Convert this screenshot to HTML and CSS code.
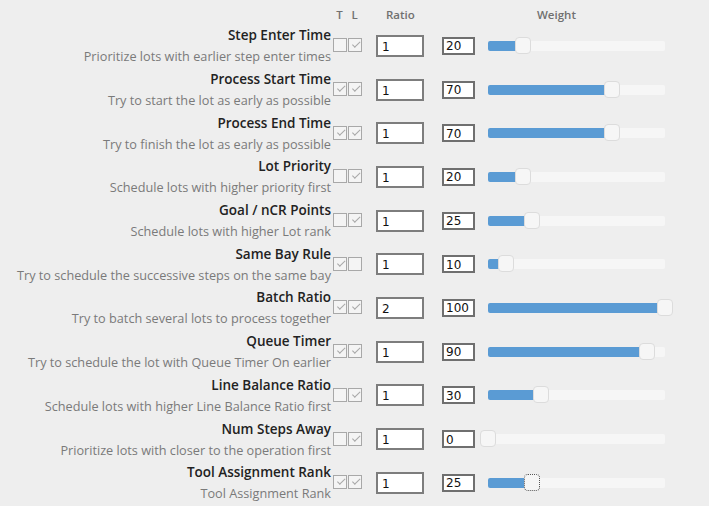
FILE: index.html
```html
<!DOCTYPE html>
<html>
<head>
<meta charset="utf-8">
<link rel="stylesheet" href="styles.css">
</head>
<body>
<div class="table">
  <div class="head"><span></span><span class="hc">T</span><span class="hc">L</span><span></span><span class="hratio">Ratio</span><span></span><span></span><span></span><span class="hweight">Weight</span></div>

  <div class="row">
    <div class="label"><div class="title">Step Enter Time</div><div class="sub">Prioritize lots with earlier step enter times</div></div>
    <span class="cb"></span><span class="cb on"></span>
    <input class="ratio" value="1"><input class="weight" value="20">
    <div class="slider"><div class="fill" style="width:20%"></div><span class="handle" style="left:20%"></span></div>
  </div>

  <div class="row">
    <div class="label"><div class="title">Process Start Time</div><div class="sub">Try to start the lot as early as possible</div></div>
    <span class="cb on"></span><span class="cb on"></span>
    <input class="ratio" value="1"><input class="weight" value="70">
    <div class="slider"><div class="fill" style="width:70%"></div><span class="handle" style="left:70%"></span></div>
  </div>

  <div class="row">
    <div class="label"><div class="title">Process End Time</div><div class="sub">Try to finish the lot as early as possible</div></div>
    <span class="cb on"></span><span class="cb on"></span>
    <input class="ratio" value="1"><input class="weight" value="70">
    <div class="slider"><div class="fill" style="width:70%"></div><span class="handle" style="left:70%"></span></div>
  </div>

  <div class="row">
    <div class="label"><div class="title">Lot Priority</div><div class="sub">Schedule lots with higher priority first</div></div>
    <span class="cb"></span><span class="cb on"></span>
    <input class="ratio" value="1"><input class="weight" value="20">
    <div class="slider"><div class="fill" style="width:20%"></div><span class="handle" style="left:20%"></span></div>
  </div>

  <div class="row">
    <div class="label"><div class="title">Goal / nCR Points</div><div class="sub">Schedule lots with higher Lot rank</div></div>
    <span class="cb"></span><span class="cb on"></span>
    <input class="ratio" value="1"><input class="weight" value="25">
    <div class="slider"><div class="fill" style="width:25%"></div><span class="handle" style="left:25%"></span></div>
  </div>

  <div class="row">
    <div class="label"><div class="title">Same Bay Rule</div><div class="sub">Try to schedule the successive steps on the same bay</div></div>
    <span class="cb on"></span><span class="cb"></span>
    <input class="ratio" value="1"><input class="weight" value="10">
    <div class="slider"><div class="fill" style="width:10%"></div><span class="handle" style="left:10%"></span></div>
  </div>

  <div class="row">
    <div class="label"><div class="title">Batch Ratio</div><div class="sub">Try to batch several lots to process together</div></div>
    <span class="cb on"></span><span class="cb on"></span>
    <input class="ratio" value="2"><input class="weight" value="100">
    <div class="slider"><div class="fill" style="width:100%"></div><span class="handle" style="left:100%"></span></div>
  </div>

  <div class="row">
    <div class="label"><div class="title">Queue Timer</div><div class="sub">Try to schedule the lot with Queue Timer On earlier</div></div>
    <span class="cb on"></span><span class="cb on"></span>
    <input class="ratio" value="1"><input class="weight" value="90">
    <div class="slider"><div class="fill" style="width:90%"></div><span class="handle" style="left:90%"></span></div>
  </div>

  <div class="row">
    <div class="label"><div class="title">Line Balance Ratio</div><div class="sub">Schedule lots with higher Line Balance Ratio first</div></div>
    <span class="cb"></span><span class="cb on"></span>
    <input class="ratio" value="1"><input class="weight" value="30">
    <div class="slider"><div class="fill" style="width:30%"></div><span class="handle" style="left:30%"></span></div>
  </div>

  <div class="row">
    <div class="label"><div class="title">Num Steps Away</div><div class="sub">Prioritize lots with closer to the operation first</div></div>
    <span class="cb"></span><span class="cb on"></span>
    <input class="ratio" value="1"><input class="weight" value="0">
    <div class="slider"><div class="fill" style="width:0%"></div><span class="handle" style="left:0%"></span></div>
  </div>

  <div class="row">
    <div class="label"><div class="title">Tool Assignment Rank</div><div class="sub">Tool Assignment Rank</div></div>
    <span class="cb on"></span><span class="cb on"></span>
    <input class="ratio" value="1"><input class="weight" value="25">
    <div class="slider"><div class="fill" style="width:25%"></div><span class="handle focus" style="left:25%"></span></div>
  </div>
</div>
</body>
</html>
```
FILE: styles.css
```css
html, body {
  margin: 0;
  padding: 0;
  background: #eeeeee;
  width: 709px;
  height: 506px;
  overflow: hidden;
  font-family: "Open Sans", sans-serif;
}
.table {
  padding-top: 4px;
}
.head, .row {
  display: grid;
  grid-template-columns: 332px 15px 15px 14px 48px 18px 33px 13px 177px;
  align-items: center;
}
.head {
  height: 20px;
  font-size: 11.5px;
  font-weight: 600;
  color: #707070;
}
.head .hc {
  text-align: center;
}
.head .hratio {
  padding-left: 10px;
}
.head .hweight {
  padding-left: 49px;
}
.row {
  height: 43.7px;
}
.label {
  text-align: right;
  line-height: 21px;
  padding-top: 1px;
  padding-right: 1px;
}
.title {
  font-size: 13.5px;
  color: #222222;
  font-weight: 600;
}
.sub {
  font-size: 12.7px;
  color: #7a7a7a;
}
.cb {
  width: 12px;
  height: 12px;
  border: 1px solid #a8a8a8;
  background: #f4f4f4;
  margin-left: 1px;
  margin-top: -1px;
  position: relative;
}
.cb.on::after {
  content: "";
  position: absolute;
  border-left: 1px solid #a8a8a8;
  border-bottom: 1px solid #a8a8a8;
  transform: rotate(-45deg);
  transform-origin: 0 0;
  left: 3px;
  top: 6px;
  width: 7px;
  height: 3px;
}
.ratio {
  grid-column: 5 / 6;
  box-sizing: border-box;
  width: 48px;
  height: 22px;
  border: 2px solid #7d7d7d;
  background: #fff;
  font-family: "DejaVu Sans", sans-serif;
  font-size: 12px;
  padding: 2px 4px 0;
  color: #111;
  margin: 0;
}
.weight {
  grid-column: 7 / 8;
  box-sizing: border-box;
  width: 33px;
  height: 18px;
  border: 2px solid #6f6f6f;
  background: #fff;
  font-family: "DejaVu Sans", sans-serif;
  font-size: 12px;
  padding: 1px 2px 0;
  color: #111;
  margin: 0;
}
.slider {
  grid-column: 9 / 10;
  position: relative;
  height: 10px;
  background: #f6f6f6;
  border-radius: 2px;
}
.fill {
  height: 100%;
  background: #5a9bd4;
  border-radius: 2px 0 0 2px;
}
.handle {
  position: absolute;
  top: -4px;
  width: 16px;
  height: 17px;
  margin-left: -8px;
  box-sizing: border-box;
  border: 1px solid #dcdcdc;
  border-radius: 4px;
  background: #f6f6f6;
}
.handle.focus {
  border: 1px dotted #555;
}
```
